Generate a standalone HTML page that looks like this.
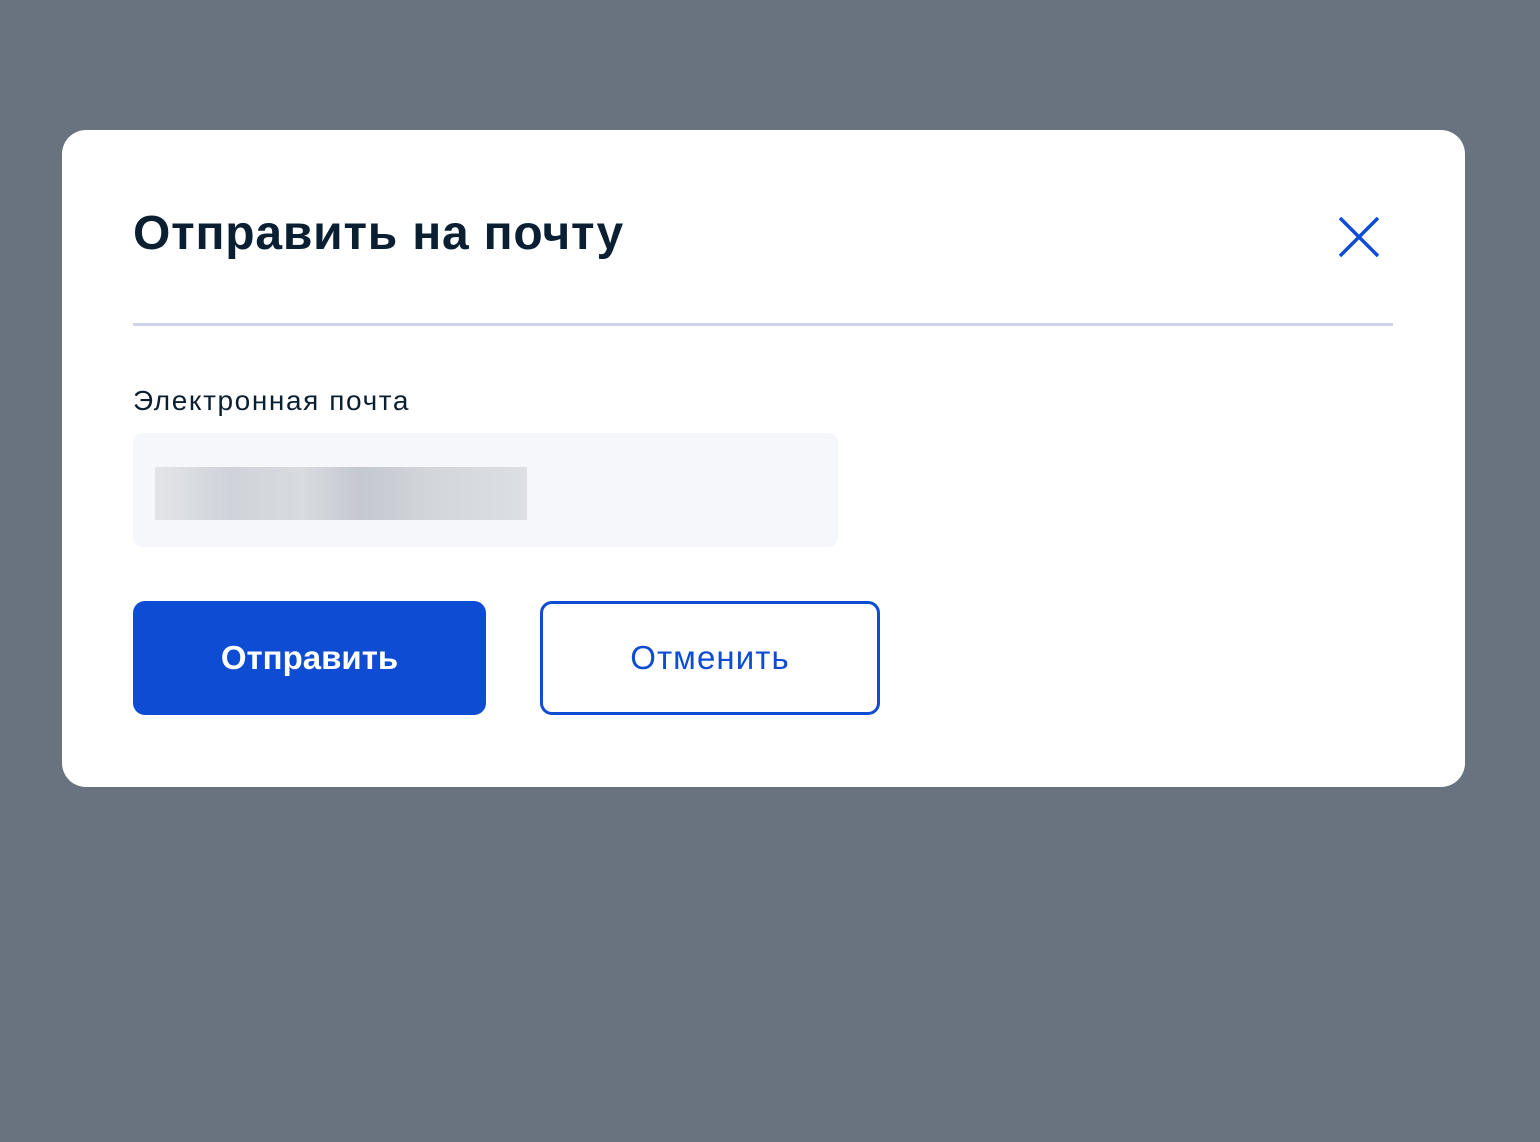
<!DOCTYPE html><html><head><meta charset="utf-8"><style>
body{margin:0;width:1540px;height:1142px;background:#68737f;font-family:"Liberation Sans",sans-serif;position:relative;overflow:hidden}
.m{position:absolute;left:62px;top:130px;width:1403px;height:657px;background:#fff;border-radius:24px}
.t{position:absolute;left:133px;top:206px;font-size:48px;font-weight:bold;color:#0b1f33;white-space:nowrap;letter-spacing:0.8px}
.hr{position:absolute;left:133px;top:323px;width:1260px;height:3px;background:#cdd4e8}
.l{position:absolute;left:133px;top:385px;font-size:28px;color:#0b1f33;letter-spacing:1.6px}
.in{position:absolute;left:133px;top:433px;width:705px;height:114px;background:#f5f7fa;border-radius:10px}
.bl{position:absolute;left:155px;top:467px;width:372px;height:53px;background:linear-gradient(90deg,#e3e5e9,#cfd3d9 20%,#d8dbe0 40%,#c4c8cf 55%,#d3d6db 75%,#dcdfe4)}
.b{position:absolute;top:601px;height:114px;border-radius:12px;box-sizing:border-box;display:flex;align-items:center;justify-content:center;font-size:33px}
.p{left:133px;width:353px;background:#0d4cd3;color:#fff;font-weight:bold}
.s{left:540px;width:340px;border:3px solid #0d4cd3;color:#0d4cd3;letter-spacing:1.1px}
</style></head><body>
<div class="m"></div>
<div class="t">Отправить на почту</div>
<svg style="position:absolute;left:1338px;top:216px" width="42" height="42"><path d="M2 2L40 40M40 2L2 40" stroke="#0d4cd3" stroke-width="3.5"/></svg>
<div class="hr"></div>
<div class="l">Электронная почта</div>
<div class="in"></div><div class="bl"></div>
<div class="b p">Отправить</div>
<div class="b s">Отменить</div>
</body></html>
